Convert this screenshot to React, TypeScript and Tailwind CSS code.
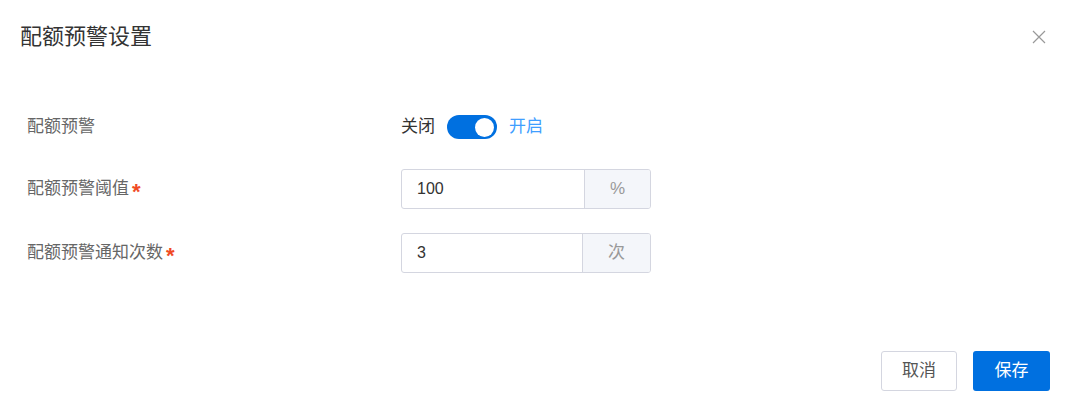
import React, { useState } from 'react';

const font = "font-['Liberation_Sans','Noto_Sans_CJK_SC',sans-serif]";

const Field: React.FC<{ label: string; required?: boolean; children: React.ReactNode }> = ({ label, required, children }) => (
  <div className="flex items-center h-[40px]">
    <div className="w-[374px] text-[17px] text-[#666] flex items-center">
      {label}
      {required && <span className="ml-[3px] text-[#f04a25] font-bold text-[22px] leading-none mt-[6px]">*</span>}
    </div>
    <div>{children}</div>
  </div>
);

const AppendInput: React.FC<{ value: string; unit: string }> = ({ value, unit }) => (
  <div className="flex w-[250px] h-[40px] border border-[#d4d6e0] rounded-[3px] overflow-hidden">
    <div className="flex-1 flex items-center pl-[15px] text-[16px] text-[#333]">{value}</div>
    <div className="flex items-center justify-center px-[25px] bg-[#f4f6fa] border-l border-[#d4d6e0] text-[17px] text-[#999]">
      {unit}
    </div>
  </div>
);

export default function App() {
  const [on, setOn] = useState(true);

  return (
    <div className={`${font} w-[1068px] h-[407px] bg-white relative flex flex-col`}>
      {/* Header */}
      <div className="flex items-center justify-between pl-[20px] pr-[22px] pt-[22px] h-[52px]">
        <h2 className="text-[22px] text-[#333] leading-none">配额预警设置</h2>
        <button className="w-[14px] h-[14px] text-[#999]" aria-label="关闭">
          <svg viewBox="0 0 14 14" width="14" height="14" fill="none" stroke="currentColor" strokeWidth="1.2">
            <path d="M1 1L13 13M13 1L1 13" />
          </svg>
        </button>
      </div>

      {/* Body */}
      <div className="flex flex-col gap-[24px] pl-[27px] pt-[57px]">
        <div className="flex items-center h-[36px]">
          <div className="w-[374px] text-[17px] text-[#666]">配额预警</div>
          <div className="flex items-center text-[17px]">
            <span className="text-[#333]">关闭</span>
            <button
              onClick={() => setOn(!on)}
              className={`mx-[12px] w-[50px] h-[24px] rounded-full flex items-center px-[3px] ${on ? 'bg-[#0070e0] justify-end' : 'bg-[#dcdfe6] justify-start'}`}
            >
              <span className="w-[19px] h-[19px] rounded-full bg-white" />
            </button>
            <span className={on ? 'text-[#409eff]' : 'text-[#333]'}>开启</span>
          </div>
        </div>

        <Field label="配额预警阈值" required>
          <AppendInput value="100" unit="%" />
        </Field>

        <Field label="配额预警通知次数" required>
          <AppendInput value="3" unit="次" />
        </Field>
      </div>

      {/* Footer */}
      <div className="mt-auto flex justify-end gap-[16px] pr-[18px] pb-[16px]">
        <button className="w-[76px] h-[40px] border border-[#d4d6e0] rounded-[3px] text-[17px] text-[#555] bg-white">取消</button>
        <button className="w-[77px] h-[40px] rounded-[3px] text-[17px] text-white bg-[#0070e0]">保存</button>
      </div>
    </div>
  );
}
